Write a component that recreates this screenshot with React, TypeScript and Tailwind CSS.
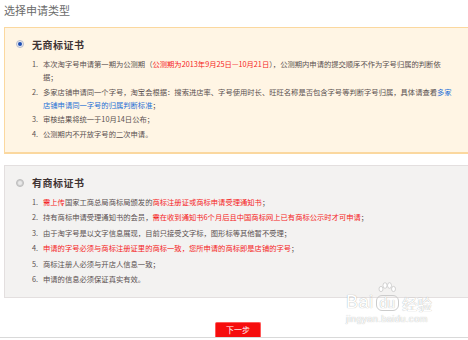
import React from "react";

const R = ({ children }: { children: React.ReactNode }) => (
  <span className="text-[#f51c1c]">{children}</span>
);
const B = ({ children }: { children: React.ReactNode }) => (
  <span className="text-[#1d6fd6]">{children}</span>
);

function Item({ n, children }: { n: number; children: React.ReactNode }) {
  return (
    <div className="flex whitespace-nowrap">
      <span className="w-[11px] shrink-0 text-[#5a5050]">{n}.</span>
      <div>{children}</div>
    </div>
  );
}

export default function App() {
  return (
    <div className="w-[468px] h-[340px] overflow-hidden bg-white relative font-['Noto_Sans_CJK_SC','Noto_Sans',sans-serif]">
      <div className="w-[500px] shrink-0">
        <div className="h-[27px] pl-[4px] pt-[1px] text-[11px] leading-[18px] text-[#6b6b6b]">
          选择申请类型
        </div>

        <div className="ml-[4px] w-[490px] border border-[#fbd89f] border-b-2 bg-[#fff5e4] pt-[9px] pb-[11px] pl-[11px]">
          <div className="flex items-center h-[14px]">
            <span className="w-[8px] h-[8px] rounded-full border border-[#b9bccb] bg-[#e8e9f0] flex items-center justify-center">
              <span className="w-[4px] h-[4px] rounded-full bg-[#1d4fb3]" />
            </span>
            <span className="ml-[8px] text-[10px] font-bold text-[#3f3434] tracking-[0.5px]">
              无商标证书
            </span>
          </div>
          <div className="mt-[7px] ml-[16px] flex flex-col gap-[1.5px] text-[7.3px] leading-[13px] text-[#5a5050]">
            <Item n={1}>
              本次淘字号申请第一期为公测期（<R>公测期为2013年9月25日—10月21日</R>），公测期内申请的提交顺序不作为字号归属的判断依
              <br />
              据；
            </Item>
            <Item n={2}>
              多家店铺申请同一个字号，淘宝会根据：搜索进店率、字号使用时长、旺旺名称是否包含字号等判断字号归属，具体请查看<B>多家</B>
              <br />
              <B>店铺申请同一字号的归属判断标准</B>；
            </Item>
            <Item n={3}>审核结果将统一于10月14日公布；</Item>
            <Item n={4}>公测期内不开放字号的二次申请。</Item>
          </div>
        </div>

        <div className="mt-[11px] ml-[4px] w-[490px] border border-[#e3dfdf] bg-[#f3f2f1] pt-[10px] pb-[11px] pl-[11px]">
          <div className="flex items-center h-[14px]">
            <span className="w-[8px] h-[8px] rounded-full border border-[#bdbdbd] bg-[#cfcfcf] flex items-center justify-center">
              <span className="w-[4px] h-[4px] rounded-full bg-[#e9e9e9]" />
            </span>
            <span className="ml-[8px] text-[10px] font-bold text-[#3f3434] tracking-[0.5px]">
              有商标证书
            </span>
          </div>
          <div className="mt-[6px] ml-[16px] flex flex-col gap-[2.5px] text-[7.3px] leading-[13px] text-[#5a5050]">
            <Item n={1}>
              <R>需上传</R>国家工商总局商标局颁发的<R>商标注册证或商标申请受理通知书</R>；
            </Item>
            <Item n={2}>
              持有商标申请受理通知书的会员，<R>需在收到通知书6个月后且中国商标网上已有商标公示时才可申请</R>；
            </Item>
            <Item n={3}>由于淘字号是以文字信息展现，目前只接受文字标，图形标等其他暂不受理；</Item>
            <Item n={4}>
              <R>申请的字号必须与商标注册证里的商标一致，您所申请的商标即是店铺的字号</R>；
            </Item>
            <Item n={5}>商标注册人必须与开店人信息一致；</Item>
            <Item n={6}>申请的信息必须保证真实有效。</Item>
          </div>
        </div>

        <div className="mt-[24px] w-[476px] flex justify-center">
          <div className="w-[46px] h-[15px] rounded-t-[2px] bg-[#f60d0d] border border-[#ff5a5a] border-b-0 flex items-center justify-center text-white text-[8px] leading-none">
            下一步
          </div>
        </div>
        <div className="w-[500px] h-[1px] bg-[#d9d9d9]" />
      </div>

      <div className="absolute left-[346px] top-[282px] flex flex-col items-start text-white [text-shadow:0_0_1px_rgba(0,0,0,0.4)] pointer-events-none">
        <div className="flex items-end leading-none">
          <span className="text-[18px] font-['Liberation_Sans',sans-serif] tracking-[0.5px]">Bai</span>
          <span className="relative mx-[2px] flex flex-col items-center">
            <svg width="20" height="12" viewBox="0 0 20 12" className="mb-[1px]">
              <g fill="white" stroke="#bbb" strokeWidth="0.6">
                <ellipse cx="4" cy="7" rx="2" ry="2.6" />
                <ellipse cx="8" cy="3.5" rx="2" ry="2.8" />
                <ellipse cx="12.5" cy="3.5" rx="2" ry="2.8" />
                <ellipse cx="16.5" cy="7" rx="2" ry="2.6" />
              </g>
            </svg>
            <span className="text-[14px] px-[3px] rounded-[6px] border border-[#ccc] font-['Liberation_Sans',sans-serif]">du</span>
          </span>
          <span className="text-[15px] ml-[1px]">经验</span>
        </div>
        <div className="mt-[3px] text-[9.5px] leading-none font-['Liberation_Sans',sans-serif] tracking-[0.3px]">
          jingyan.baidu.com
        </div>
      </div>
    </div>
  );
}
